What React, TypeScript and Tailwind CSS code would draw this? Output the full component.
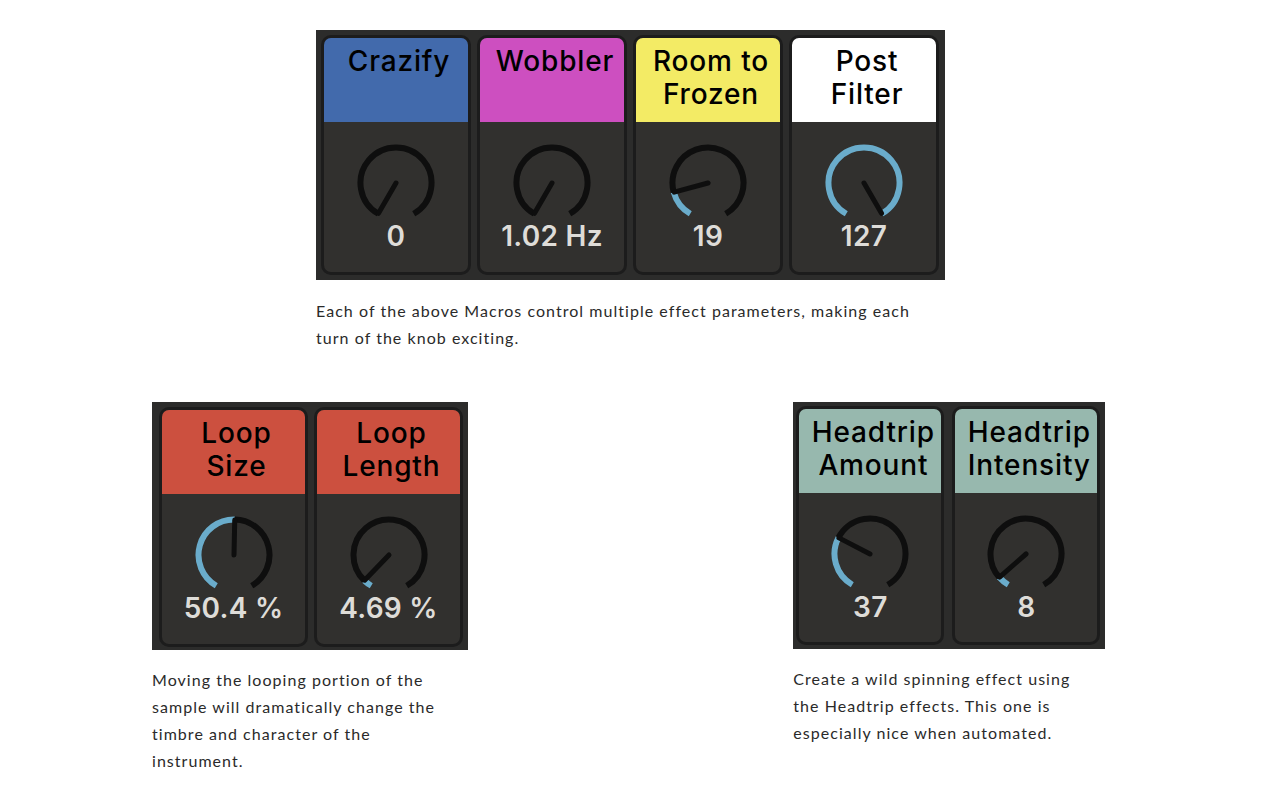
import React from "react";

const START = -150;
const END = 150;

function pt(cx: number, cy: number, r: number, deg: number) {
  const a = (deg * Math.PI) / 180;
  return [cx + r * Math.sin(a), cy - r * Math.cos(a)];
}

function arc(cx: number, cy: number, r: number, a0: number, a1: number) {
  const [x0, y0] = pt(cx, cy, r, a0);
  const [x1, y1] = pt(cx, cy, r, a1);
  const large = a1 - a0 > 180 ? 1 : 0;
  return `M ${x0} ${y0} A ${r} ${r} 0 ${large} 1 ${x1} ${y1}`;
}

function Knob({ v }: { v: number }) {
  const cx = 40;
  const cy = 40;
  const r = 35.5;
  const ang = START + v * (END - START);
  const [nx, ny] = pt(cx, cy, 35, ang);
  return (
    <svg width="80" height="80" viewBox="0 0 80 80" className="block">
      {v > 0.001 && (
        <path d={arc(cx, cy, r, START, ang)} fill="none" stroke="#6aaccb" strokeWidth="6" />
      )}
      {v < 0.999 && (
        <path d={arc(cx, cy, r, ang, END)} fill="none" stroke="#0e0e0e" strokeWidth="6" />
      )}
      <line x1={cx} y1={cy} x2={nx} y2={ny} stroke="#0e0e0e" strokeWidth="5" strokeLinecap="round" />
    </svg>
  );
}

type CardProps = {
  lines: string[];
  color: string;
  value: string;
  v: number;
  w: number;
  h: number;
};

const uiFont = { fontFamily: "Inter, 'Noto Sans', sans-serif" };

function Card({ lines, color, value, v, w, h }: CardProps) {
  return (
    <div
      className="rounded-[10px] border-[3px] border-[#1c1c1c] bg-[#31302e] overflow-hidden flex flex-col items-center shrink-0"
      style={{ width: w, height: h }}
    >
      <div
        className="w-full h-[84px] flex flex-col items-center pt-[7px] pl-[6px] text-[28px] leading-[33px] tracking-[0.03em] text-black font-medium"
        style={{ backgroundColor: color, ...uiFont }}
      >
        {lines.map((l) => (
          <div key={l} className="whitespace-nowrap">{l}</div>
        ))}
      </div>
      <div className="mt-[21px]">
        <Knob v={v} />
      </div>
      <div
        className="mt-[-3px] text-[28px] leading-[32px] tracking-[0.01em] font-semibold text-[#dedcd8] whitespace-nowrap"
        style={uiFont}
      >
        {value}
      </div>
    </div>
  );
}

const captionCls =
  "text-[16px] leading-[27px] font-normal tracking-[0.065em] text-[#2a2a2a]";
const captionFont = { fontFamily: "Lato, 'Noto Sans', sans-serif" };

export default function App() {
  return (
    <div className="w-[1266px] h-[788px] bg-white overflow-hidden">
      <div className="w-[962px] ml-[152px]">
        {/* top block */}
        <div className="ml-[164px] pt-[30px]">
          <div className="w-[629px] h-[250px] bg-[#2c2c2b] flex gap-[6px] pl-[5px] pt-[5px]">
            <Card lines={["Crazify"]} color="#426aac" value="0" v={0} w={150} h={240} />
            <Card lines={["Wobbler"]} color="#cd4fc0" value="1.02 Hz" v={0} w={150} h={240} />
            <Card lines={["Room to", "Frozen"]} color="#f3eb65" value="19" v={19 / 127} w={150} h={240} />
            <Card lines={["Post", "Filter"]} color="#ffffff" value="127" v={1} w={150} h={240} />
          </div>
          <p className={`${captionCls} mt-[17px] w-[620px]`} style={captionFont}>
            Each of the above Macros control multiple effect parameters, making each turn of the knob exciting.
          </p>
        </div>

        {/* bottom row */}
        <div className="grid grid-cols-3 mt-[51px]">
          <div className="col-start-1">
            <div className="w-[316px] h-[248px] bg-[#2c2c2b] flex gap-[6px] pl-[7px] pt-[5px]">
              <Card lines={["Loop", "Size"]} color="#cc503f" value="50.4 %" v={0.504} w={149} h={240} />
              <Card lines={["Loop", "Length"]} color="#cc503f" value="4.69 %" v={0.0469} w={149} h={240} />
            </div>
            <p className={`${captionCls} mt-[16px] w-[300px]`} style={captionFont}>
              Moving the looping portion of the sample will dramatically change the timbre and character of the instrument.
            </p>
          </div>
          <div className="col-start-3">
            <div className="w-[312px] h-[247px] bg-[#2c2c2b] flex gap-[8px] pl-[3px] pt-[4px]">
              <Card lines={["Headtrip", "Amount"]} color="#97b8ae" value="37" v={37 / 127} w={148} h={239} />
              <Card lines={["Headtrip", "Intensity"]} color="#97b8ae" value="8" v={8 / 127} w={148} h={239} />
            </div>
            <p className={`${captionCls} mt-[16px] w-[300px]`} style={captionFont}>
              Create a wild spinning effect using the Headtrip effects. This one is especially nice when automated.
            </p>
          </div>
        </div>
      </div>
    </div>
  );
}
